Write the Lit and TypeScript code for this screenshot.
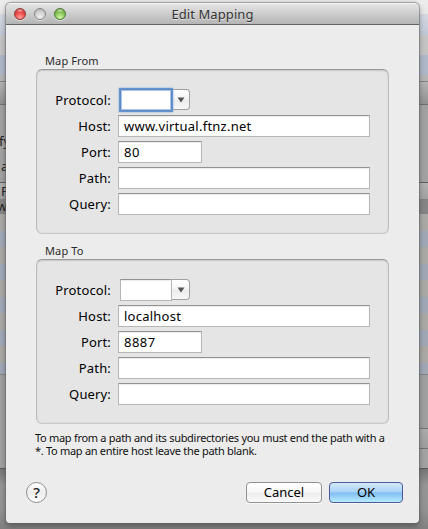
import { LitElement, html, css } from "lit";
import { customElement, property } from "lit/decorators.js";
import { classMap } from "lit/directives/class-map.js";

type Field = { label: string; value: string; kind: "combo" | "full" | "short"; focus?: boolean };

@customElement("traffic-light")
class TrafficLight extends LitElement {
  @property() tone = "red";
  static styles = css`
    :host { display: block; width: 12px; height: 12px; }
    .dot { box-sizing: border-box; width: 12px; height: 12px; border-radius: 50%; border: 1px solid; box-shadow: 0 1px 0 rgba(255,255,255,.5); }
    .red { border-color: #8e3b38; background: radial-gradient(ellipse 4px 2px at 50% 14%, #fff9, transparent), radial-gradient(circle at 50% 85%, #ffa49b 0, #ee4d4b 48%, #b92f30 100%); }
    .gray { border-color: #858585; background: radial-gradient(circle at 50% 85%, #f2f2f2 0, #d2d2d2 55%, #a9a9a9 100%); }
    .green { border-color: #4c7a36; background: radial-gradient(ellipse 4px 2px at 50% 14%, #fff9, transparent), radial-gradient(circle at 50% 85%, #d6f7a5 0, #8bc95c 48%, #558f35 100%); }
  `;
  render() { return html`<div class="dot ${this.tone}"></div>`; }
}

@customElement("map-group")
class MapGroup extends LitElement {
  @property() heading = "";
  @property({ attribute: false }) fields: Field[] = [];
  static styles = css`
    :host { display: block; }
    .heading { height: 15px; padding-left: 9px; font-size: 11px; line-height: 14px; letter-spacing: .12px; color: #2b2b2b; }
    .box { box-sizing: border-box; height: 165px; padding: 19px 0 0; border: 1px solid #bdbdbd; border-top: 1px solid #9b9b9b; border-bottom-color: #c9c9c9; border-radius: 6px; background: #e5e5e5; box-shadow: inset 0 1px 1px #c8c8c8, inset 0 0 2px #d2d2d2; display: grid; grid-auto-rows: 22px; row-gap: 4px; }
    .row { display: grid; grid-template-columns: 74px 252px; column-gap: 7px; align-items: center; font-size: 13px; line-height: 20px; color: #000; }
    .label { text-align: right; white-space: nowrap; letter-spacing: .15px; }
    .input { box-sizing: border-box; height: 22px; border: 1px solid #b6b6b6; border-top-color: #919191; background: #fff; box-shadow: inset 0 1px 1px #ececec; padding-left: 5px; white-space: nowrap; letter-spacing: .24px; }
    .short { width: 84px; letter-spacing: .45px; }
    .combo { display: flex; padding-left: 2px; }
    .combo .input { width: 52px; }
    .combo .focus { border: 1px solid #5c8bc5; box-shadow: 0 0 0 1px #6594cc, 0 0 2px 1px #83aadb, inset 0 0 0 1px #a9c6e8; z-index: 1; }
    .arrow { box-sizing: border-box; width: 18px; height: 21px; border: 1px solid #a0a0a0; border-left: 0; border-radius: 0 4px 4px 0; background: linear-gradient(#fff, #f5f5f5 48%, #ebebeb 52%, #f8f8f8); display: grid; place-items: center; }
    .arrow svg { display: block; }
  `;
  private control(f: Field) {
    if (f.kind === "combo")
      return html`<div class="combo"><div class=${classMap({ input: true, focus: !!f.focus })}></div>
        <div class="arrow"><svg width="8" height="6" viewBox="0 0 8 6"><path d="M.5.5h7L4 5.6z" fill="#555" /></svg></div></div>`;
    return html`<div class=${classMap({ input: true, short: f.kind === "short" })}>${f.value}</div>`;
  }
  render() {
    return html`<div class="heading">${this.heading}</div>
      <div class="box">${this.fields.map((f) => html`<div class="row"><div class="label">${f.label}:</div>${this.control(f)}</div>`)}</div>`;
  }
}

const fieldsFor = (host: string, port: string, focus: boolean): Field[] => [
  { label: "Protocol", value: "", kind: "combo", focus },
  { label: "Host", value: host, kind: "full" },
  { label: "Port", value: port, kind: "short" },
  { label: "Path", value: "", kind: "full" },
  { label: "Query", value: "", kind: "full" },
];

@customElement("app-root")
class AppRoot extends LitElement {
  static styles = css`
    :host { display: grid; grid-template: 529px / 428px; overflow: hidden; font-family: "Noto Sans", "Open Sans", sans-serif; letter-spacing: 0; }
    .backdrop { grid-area: 1 / 1; display: flex; justify-content: space-between; background: linear-gradient(#e6e6e6 0 20px, #999 20px 500px, #808080); }
    .strip { height: 529px; width: 12px; display: flex; flex-direction: column; overflow: hidden; font-size: 13px; line-height: 18px; color: #222; }
    .strip > div { flex: none; box-sizing: border-box; overflow: hidden; }
    .top { height: 81px; background: linear-gradient(#f4f4f4aa, transparent 40px), linear-gradient(#dedede 14px, #bcc4d3 14px 35px, #c4c4c4 35px 55px, #afb8c8 55px 75px, #b5b5b5 75px); }
    .bar { height: 24px; border-top: 1px solid #858585; border-bottom: 1px solid #707070; background: linear-gradient(#b4b4b4, #919191); }
    .panel { height: 77px; padding-top: 27px; background: #a2a2a2; }
    .panel span { display: block; height: 25px; white-space: nowrap; }
    .head { height: 17px; border-top: 1px solid #606060; background: linear-gradient(#b2b2b2, #a0a0a0); }
    .selected { height: 15px; background: #858585; line-height: 15px; }
    .rows { height: 161px; background: repeating-linear-gradient(#aaa9a6 0 17px, #a0a8b6 17px 33px); border-bottom: 1px solid #858585; }
    .foot { height: 53px; background: #a0a0a0; }
    .status { height: 41px; border-bottom: 1px solid #5d5d5d; background: #a0a0a0; }
    .right .status { border-top: 1px solid #747474; background: linear-gradient(#acacac, #9d9d9d 19px, #747474 19px 20px, #a3a3a3 20px); }
    .below { height: 60px; background: linear-gradient(#777, #969696 16px, #949494 40px, #808080); }
    .left .l1 { margin-left: -1px; }
    .left .l2 { margin-left: 1px; }
    .left .head { padding-left: 1px; line-height: 16px; }
    .left .selected { text-indent: -3px; }
    .window { grid-area: 1 / 1; z-index: 1; width: 413px; height: 520px; margin: 3px 0 0 6px; border-radius: 5px 5px 4px 4px; background: #ececec; box-shadow: 0 0 1px 0.5px #6668, 0 3px 6px #0005; overflow: hidden; }
    .titlebar { box-sizing: border-box; height: 22px; border-bottom: 1px solid #636363; background: linear-gradient(#f4f4f4 0 1px, #e4e4e4 1px, #b4b4b4); display: grid; grid-template-columns: 72px 1fr 72px; align-items: center; }
    .lights { display: flex; gap: 8px; padding-left: 8px; }
    .title { text-align: center; font-size: 13px; line-height: 20px; letter-spacing: .08px; color: #333; text-shadow: 0 1px 0 #fff8; }
    .content { padding: 29px 30px 0; }
    map-group { width: 353px; }
    map-group + map-group { margin-top: 10px; }
    .note { margin-top: 7px; margin-left: -1px; font-size: 11px; line-height: 13px; letter-spacing: -.29px; color: #111; white-space: nowrap; }
    .actions { display: flex; align-items: center; margin: 25px -14px 0 -10px; height: 21px; }
    .help { box-sizing: border-box; width: 21px; height: 21px; border: 1px solid #8c8c8c; border-radius: 50%; background: linear-gradient(#fff, #ededed 50%, #fff); font-size: 15px; line-height: 19px; text-align: center; font-weight: 500; margin-right: auto; color: #222; }
    .button { box-sizing: border-box; width: 76px; height: 21px; border: 1px solid #929292; border-radius: 4px; background: linear-gradient(#fff, #f7f7f7 48%, #ececec 52%, #fafafa); font-size: 13px; line-height: 19px; text-align: center; box-shadow: 0 1px 0 #fff8; }
    .ok { width: 74px; margin-left: 7px; border-color: #4c5b98; background: linear-gradient(#d5eafc, #a8d2f8 48%, #7fbef5 52%, #b8ecff); }
  `;
  render() {
    return html`
      <div class="backdrop">
        <div class="strip left">
          <div class="top"></div><div class="bar"></div>
          <div class="panel"><span class="l1">fy</span><span class="l2">a</span></div>
          <div class="head">F</div><div class="selected">w</div>
          <div class="rows"></div><div class="foot"></div><div class="status"></div><div class="below"></div>
        </div>
        <div class="strip right">
          <div class="top"></div><div class="bar"></div><div class="panel"></div>
          <div class="head"></div><div class="selected"></div>
          <div class="rows"></div><div class="foot"></div><div class="status"></div><div class="below"></div>
        </div>
      </div>
      <div class="window">
        <div class="titlebar">
          <div class="lights"><traffic-light tone="red"></traffic-light><traffic-light tone="gray"></traffic-light><traffic-light tone="green"></traffic-light></div>
          <div class="title">Edit Mapping</div>
        </div>
        <div class="content">
          <map-group heading="Map From" .fields=${fieldsFor("www.virtual.ftnz.net", "80", true)}></map-group>
          <map-group heading="Map To" .fields=${fieldsFor("localhost", "8887", false)}></map-group>
          <div class="note">To map from a path and its subdirectories you must end the path with a<br />*. To map an entire host leave the path blank.</div>
          <div class="actions"><div class="help">?</div><div class="button">Cancel</div><div class="button ok">OK</div></div>
        </div>
      </div>`;
  }
}
